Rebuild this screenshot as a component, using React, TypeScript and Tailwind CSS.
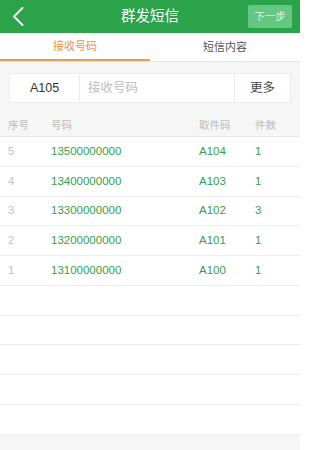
interface Row {
  no: number
  phone: string
  code: string
  count: number
}

const rows: Row[] = [
  { no: 5, phone: "13500000000", code: "A104", count: 1 },
  { no: 4, phone: "13400000000", code: "A103", count: 1 },
  { no: 3, phone: "13300000000", code: "A102", count: 3 },
  { no: 2, phone: "13200000000", code: "A101", count: 1 },
  { no: 1, phone: "13100000000", code: "A100", count: 1 },
]

const emptyRows = [0, 1, 2, 3, 4]

export default function App() {
  return (
    <div className="w-[300px] h-[450px] overflow-hidden bg-[#f6f6f6] font-['Liberation_Sans','Noto_Sans_CJK_SC',sans-serif]">
      {/* 顶部导航 */}
      <div className="h-[33px] bg-[#2ba34b] grid grid-cols-[70px_1fr_70px] items-center">
        <div className="pl-[12px] flex items-center">
          <svg width="12" height="19" viewBox="0 0 12 19" fill="none">
            <path d="M10.5 1 L2 9.5 L10.5 18" stroke="white" strokeWidth="1.8" strokeLinecap="round" strokeLinejoin="round" />
          </svg>
        </div>
        <p className="text-center text-white text-[14.5px] leading-none">群发短信</p>
        <div className="flex justify-end pr-[8px]">
          <button className="w-[44px] h-[23px] rounded-[2px] bg-[#62c882] text-[#dff5e5] text-[10.5px] leading-none">
            下一步
          </button>
        </div>
      </div>

      {/* 标签 */}
      <div className="h-[29px] bg-white flex border-b border-[#e6e6e6]">
        <div className="flex-1 flex items-center justify-center border-b-2 border-[#ef9a4f] text-[#e9924a] text-[11px]">
          接收号码
        </div>
        <div className="flex-1 flex items-center justify-center text-[#555] text-[11px]">短信内容</div>
      </div>

      {/* 输入行 */}
      <div className="px-[9px] pt-[11px]">
        <div className="h-[30px] bg-white flex border border-[#ededed]">
          <div className="w-[70px] flex items-center justify-center text-[#333] text-[12.5px] border-r border-[#ededed]">
            A105
          </div>
          <div className="flex-1 flex items-center pl-[8px] text-[#bdbdbd] text-[12.5px]">接收号码</div>
          <div className="w-[56px] flex items-center justify-center text-[#444] text-[12.5px] border-l border-[#ededed]">
            更多
          </div>
        </div>
      </div>

      {/* 表头 */}
      <div className="h-[34px] pt-[12px] flex items-center text-[#bcbcbc] text-[10.5px] border-b border-[#e8e8e8]">
        <span className="w-[51px] pl-[8px]">序号</span>
        <span className="w-[148px]">号码</span>
        <span className="w-[56px]">取件码</span>
        <span>件数</span>
      </div>

      {/* 列表 */}
      <div className="bg-white">
        {rows.map((r) => (
          <div
            key={r.no}
            className="h-[29.75px] flex items-center border-b border-[#ececec] text-[11.5px]"
          >
            <span className="w-[51px] pl-[8px] text-[#c2c2c2]">{r.no}</span>
            <span className="w-[148px] text-[#34a046]">{r.phone}</span>
            <span className="w-[56px] text-[#34a046]">{r.code}</span>
            <span className="text-[#34a046]">{r.count}</span>
          </div>
        ))}
        {emptyRows.map((i) => (
          <div key={i} className="h-[29.75px] border-b border-[#ebebeb]" />
        ))}
      </div>
    </div>
  )
}
